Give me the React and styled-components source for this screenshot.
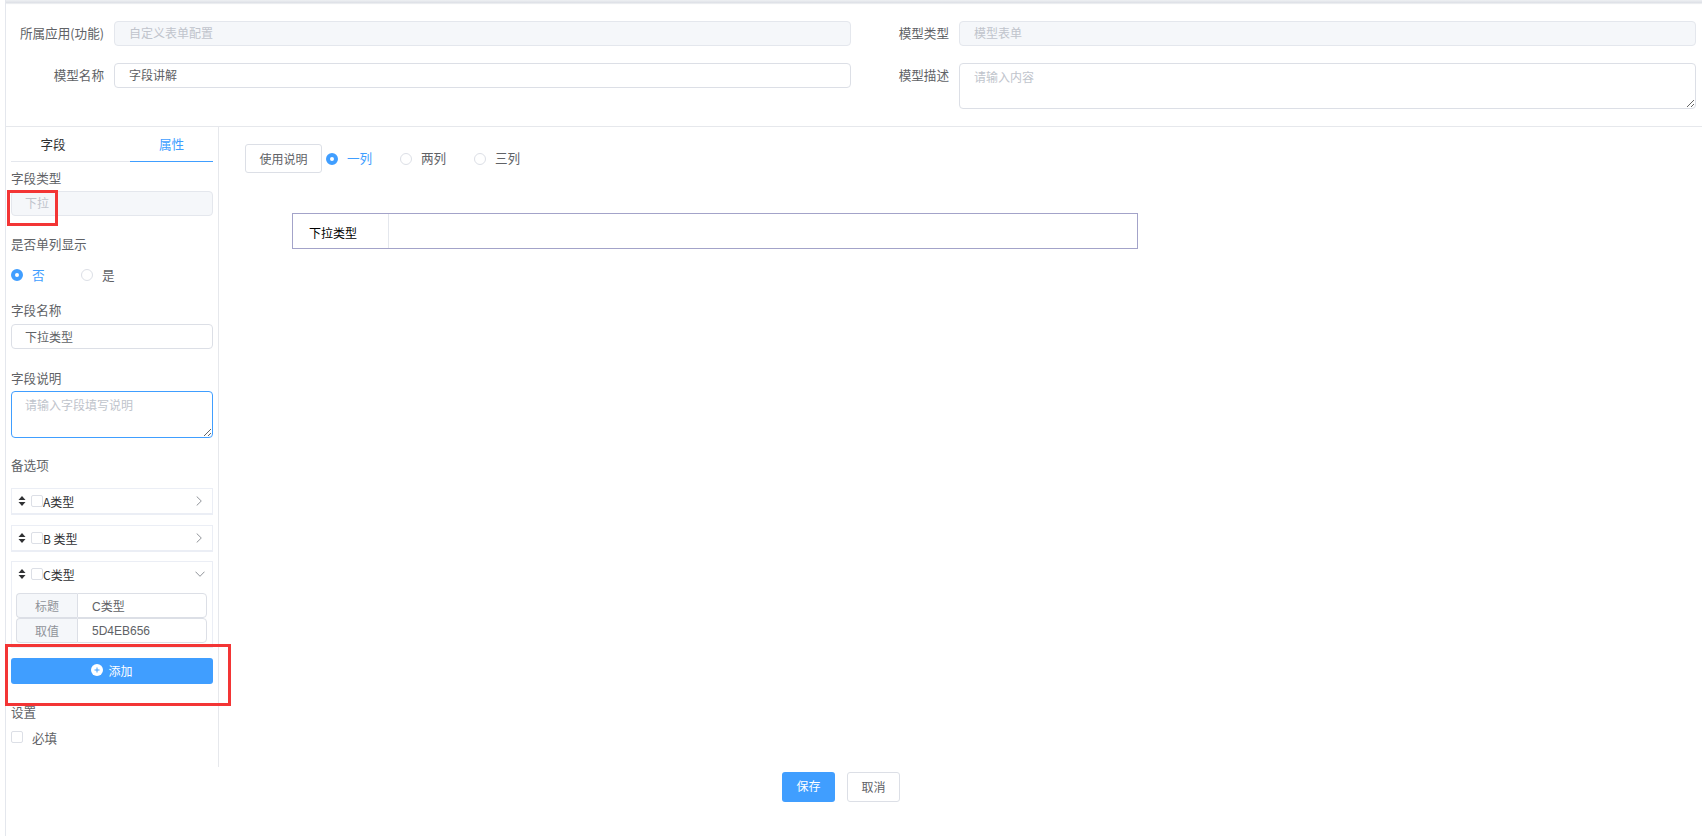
import React from "react";
import styled, { createGlobalStyle } from "styled-components";

const Global = createGlobalStyle`
  html, body { margin: 0; padding: 0; background: #fff; }
  body { font-family: "Noto Sans CJK SC", "Liberation Sans", sans-serif; font-size: 12.6px; color: #606266; }
  * { box-sizing: border-box; }
  input, textarea, button { font-family: inherit; }
  input::placeholder, textarea::placeholder { color: #c0c4cc; opacity: 1; }
`;

const Page = styled.div`
  position: relative;
  width: 1702px;
  height: 836px;
  overflow: hidden;
  padding-left: 5px;
`;
const Frame = styled.div`
  height: 836px;
  border-left: 1px solid #e4e7ed;
`;
const TopBar = styled.div`
  height: 3px;
  background: linear-gradient(#eef0f3, #dcdfe5);
  box-shadow: 0 1px 1px rgba(205, 210, 218, 0.45);
`;
const Header = styled.div`
  display: grid;
  grid-template-columns: 1fr 1fr;
  height: 124px;
  padding: 18px 6px 0 0;
  row-gap: 17px;
  grid-template-rows: 25px 46px;
  border-bottom: 1px solid #e6e8ec;
`;
const FormRow = styled.div`
  display: flex;
  align-items: flex-start;
`;
const FormLabel = styled.label`
  width: 98px;
  margin-right: 10px;
  flex: none;
  text-align: right;
  line-height: 23px;
  font-size: 12.6px;
  color: #606266;
`;
const TextInput = styled.input`
  width: 100%;
  height: 25px;
  padding: 0 ${(p) => p.$pad ?? 14}px ${(p) => p.$pb ?? 2}px;
  border: 1px solid #dcdfe6;
  border-radius: 4px;
  font-size: 12px;
  color: #606266;
  background: #fff;
  outline: none;
  &:disabled { background: #f5f7fa; border-color: #e4e7ed; color: #c0c4cc; -webkit-text-fill-color: #c0c4cc; opacity: 1; }
`;
const TextArea = styled.textarea`
  display: block;
  width: 100%;
  height: ${(p) => p.$h}px;
  padding: 4px ${(p) => p.$pad ?? 14}px;
  border: 1px solid ${(p) => (p.$focus ? "#409eff" : "#dcdfe6")};
  border-radius: 4px;
  font-size: 12px;
  line-height: 18px;
  color: #606266;
  background: #fff;
  outline: none;
`;
const Body = styled.div`
  display: flex;
  height: 640px;
`;
const Sidebar = styled.aside`
  width: 213px;
  flex: none;
  padding: 0 5px;
  border-right: 1px solid #e6e8ec;
`;
const Tabs = styled.div`
  display: flex;
  justify-content: space-between;
  height: 35px;
  border-bottom: 1px solid #e4e7ed;
`;
const Tab = styled.div`
  width: ${(p) => p.$w}px;
  height: 35px;
  padding-top: 6px;
  line-height: 22px;
  text-align: center;
  font-size: 12.6px;
  color: ${(p) => (p.$active ? "#409eff" : "#303133")};
  border-bottom: ${(p) => (p.$active ? "1px solid #409eff" : "none")};
`;
const Field = styled.div`
  margin-top: ${(p) => p.$top}px;
`;
const FieldLabel = styled.div`
  height: 20px;
  line-height: 20px;
  margin-bottom: ${(p) => p.$gap ?? 3}px;
  font-size: 12.6px;
  color: #606266;
`;
const RadioRow = styled.div`
  display: flex;
  align-items: center;
  height: 20px;
`;
const RadioDot = styled.span`
  width: 12px;
  height: 12px;
  flex: none;
  border-radius: 50%;
  border: ${(p) => (p.$on ? "4px solid #409eff" : "1px solid #dcdfe6")};
  background: #fff;
`;
const RadioText = styled.span`
  margin-left: 9px;
  margin-right: ${(p) => p.$mr}px;
  width: 26px;
  font-size: 12.6px;
  line-height: 16px;
  padding-bottom: 1px;
  white-space: nowrap;
  color: ${(p) => (p.$on ? "#409eff" : "#606266")};
`;
const OptionItem = styled.div`
  margin-top: ${(p) => p.$top}px;
  border: 1px solid #ebeef5;
  border-bottom-width: 2px;
`;
const OptionHead = styled.div`
  display: flex;
  align-items: center;
  height: 24px;
  padding-left: 6px;
  font-size: 12px;
  color: #303133;
  white-space: pre;
`;
const SortIcon = styled.svg`
  width: 8px;
  height: 10px;
  flex: none;
  margin-right: 5px;
`;
const CheckBox = styled.span`
  width: 12px;
  height: 12px;
  flex: none;
  border: 1px solid #dcdfe6;
  border-radius: 2px;
  background: #fff;
`;
const Chevron = styled.svg`
  margin-left: auto;
  margin-right: ${(p) => p.$mr}px;
  width: ${(p) => p.$w}px;
  height: ${(p) => p.$h}px;
  flex: none;
`;
const OptionBody = styled.div`
  padding: 7px 5px 3px 4px;
`;
const InputGroup = styled.div`
  display: flex;
  height: 25px;
`;
const Prepend = styled.div`
  width: 61px;
  flex: none;
  line-height: 23px;
  text-align: center;
  font-size: 12px;
  color: #909399;
  background: #f5f7fa;
  border: 1px solid #dcdfe6;
  border-right: 0;
  border-radius: 4px 0 0 4px;
`;
const GroupInput = styled.input`
  flex: 1;
  min-width: 0;
  height: 25px;
  padding: 0 14px;
  border: 1px solid #dcdfe6;
  border-radius: 0 4px 4px 0;
  font-size: 12px;
  font-family: "Liberation Sans", "Noto Sans CJK SC", sans-serif;
  color: #606266;
  outline: none;
`;
const AddButton = styled.button`
  display: flex;
  align-items: center;
  justify-content: center;
  gap: 5px;
  width: 100%;
  height: 26px;
  margin-top: 10px;
  padding: 0 0 2px;
  border: 0;
  border-radius: 3px;
  background: #409eff;
  color: #fff;
  font-size: 12px;
`;
const CheckRow = styled.div`
  display: flex;
  align-items: center;
  gap: 9px;
  height: 20px;
  margin-top: 5px;
  font-size: 12.6px;
`;
const Main = styled.main`
  flex: 1;
  padding: 17px 0 0 26px;
`;
const Toolbar = styled.div`
  display: flex;
  align-items: center;
  gap: 4px;
`;
const PlainButton = styled.button`
  height: ${(p) => p.$h}px;
  width: ${(p) => p.$w}px;
  padding: 0 0 ${(p) => p.$pb ?? 0}px;
  border: 1px solid #dcdfe6;
  border-radius: 3px;
  background: #fff;
  color: #606266;
  font-size: 12px;
`;
const Columns = styled.div`
  display: flex;
  align-items: center;
`;
const FormTable = styled.div`
  display: flex;
  width: 846px;
  height: 36px;
  margin: 40px 0 0 47px;
  border: 1px solid #a3a3c9;
`;
const TableLabel = styled.div`
  width: 96px;
  padding-left: 16px;
  line-height: 37px;
  font-size: 12px;
  color: #000;
  border-right: 1px solid #e4e7ed;
`;
const Footer = styled.div`
  display: flex;
  justify-content: center;
  gap: 12px;
  padding: 5px 26px 0 0;
`;
const PrimaryButton = styled.button`
  width: 53px;
  height: 30px;
  padding: 0 0 3px;
  border: 0;
  border-radius: 3px;
  background: #409eff;
  color: #fff;
  font-size: 12px;
`;
const RedMark = styled.div`
  position: absolute;
  left: ${(p) => p.$x}px;
  top: ${(p) => p.$y}px;
  width: ${(p) => p.$w}px;
  height: ${(p) => p.$h}px;
  border: 3px solid #f33535;
  pointer-events: none;
`;

const Sort = () => (
  <SortIcon viewBox="0 0 8 10">
    <path d="M4 0 7.5 4H.5zM4 10 .5 6h7z" fill="#303133" />
  </SortIcon>
);
const Right = () => (
  <Chevron $w={6} $h={10} $mr={10} viewBox="0 0 6 10" fill="none" stroke="#909399" strokeWidth="1">
    <path d="M.7.5 5.3 5 .7 9.5" />
  </Chevron>
);
const Down = () => (
  <Chevron $w={10} $h={6} $mr={7} viewBox="0 0 10 6" fill="none" stroke="#909399" strokeWidth="1">
    <path d="M.5.7 5 5.3 9.5.7" />
  </Chevron>
);
const Option = ({ top, text, open, children }) => (
  <OptionItem $top={top}>
    <OptionHead>
      <Sort />
      <CheckBox />
      <span>{text}</span>
      {open ? <Down /> : <Right />}
    </OptionHead>
    {children}
  </OptionItem>
);

export default function App() {
  return (
    <Page>
      <Global />
      <Frame>
        <TopBar />
        <Header>
          <FormRow>
            <FormLabel>所属应用(功能)</FormLabel>
            <TextInput disabled value="自定义表单配置" readOnly />
          </FormRow>
          <FormRow>
            <FormLabel>模型类型</FormLabel>
            <TextInput disabled value="模型表单" readOnly />
          </FormRow>
          <FormRow>
            <FormLabel>模型名称</FormLabel>
            <TextInput value="字段讲解" readOnly />
          </FormRow>
          <FormRow>
            <FormLabel>模型描述</FormLabel>
            <TextArea $h={46} placeholder="请输入内容" />
          </FormRow>
        </Header>
        <Body>
          <Sidebar>
            <Tabs>
              <Tab $w={84}>字段</Tab>
              <Tab $w={83} $active>属性</Tab>
            </Tabs>
            <Field $top={6}>
              <FieldLabel>字段类型</FieldLabel>
              <TextInput $pad={13} disabled value="下拉" readOnly />
            </Field>
            <Field $top={18}>
              <FieldLabel $gap={11}>是否单列显示</FieldLabel>
              <RadioRow>
                <RadioDot $on />
                <RadioText $on $mr={23}>否</RadioText>
                <RadioDot />
                <RadioText>是</RadioText>
              </RadioRow>
            </Field>
            <Field $top={15}>
              <FieldLabel $gap={4}>字段名称</FieldLabel>
              <TextInput $pad={13} $pb={0} value="下拉类型" readOnly />
            </Field>
            <Field $top={19}>
              <FieldLabel>字段说明</FieldLabel>
              <TextArea $h={47} $pad={13} $focus placeholder="请输入字段填写说明" />
            </Field>
            <Field $top={17}>
              <FieldLabel $gap={0}>备选项</FieldLabel>
              <Option top={13} text="A类型" />
              <Option top={10} text="B 类型" />
              <Option top={9} text="C类型" open>
                <OptionBody>
                  <InputGroup>
                    <Prepend>标题</Prepend>
                    <GroupInput value="C类型" readOnly />
                  </InputGroup>
                  <InputGroup>
                    <Prepend>取值</Prepend>
                    <GroupInput value="5D4EB656" readOnly />
                  </InputGroup>
                </OptionBody>
              </Option>
              <AddButton>
                <svg width="12" height="12" viewBox="0 0 12 12">
                  <circle cx="6" cy="6" r="6" fill="#fff" />
                  <path d="M3.5 6h5M6 3.5v5" stroke="#409eff" strokeWidth="1" />
                </svg>
                添加
              </AddButton>
            </Field>
            <Field $top={18}>
              <FieldLabel $gap={0}>设置</FieldLabel>
              <CheckRow>
                <CheckBox />
                必填
              </CheckRow>
            </Field>
          </Sidebar>
          <Main>
            <Toolbar>
              <PlainButton $w={77} $h={29}>使用说明</PlainButton>
              <Columns>
                <RadioDot $on />
                <RadioText $on $mr={27}>一列</RadioText>
                <RadioDot />
                <RadioText $mr={27}>两列</RadioText>
                <RadioDot />
                <RadioText>三列</RadioText>
              </Columns>
            </Toolbar>
            <FormTable>
              <TableLabel>下拉类型</TableLabel>
            </FormTable>
          </Main>
        </Body>
        <Footer>
          <PrimaryButton>保存</PrimaryButton>
          <PlainButton $w={53} $h={30} $pb={2}>取消</PlainButton>
        </Footer>
      </Frame>
      <RedMark $x={7} $y={190} $w={51} $h={36} />
      <RedMark $x={5} $y={644} $w={226} $h={62} />
    </Page>
  );
}
